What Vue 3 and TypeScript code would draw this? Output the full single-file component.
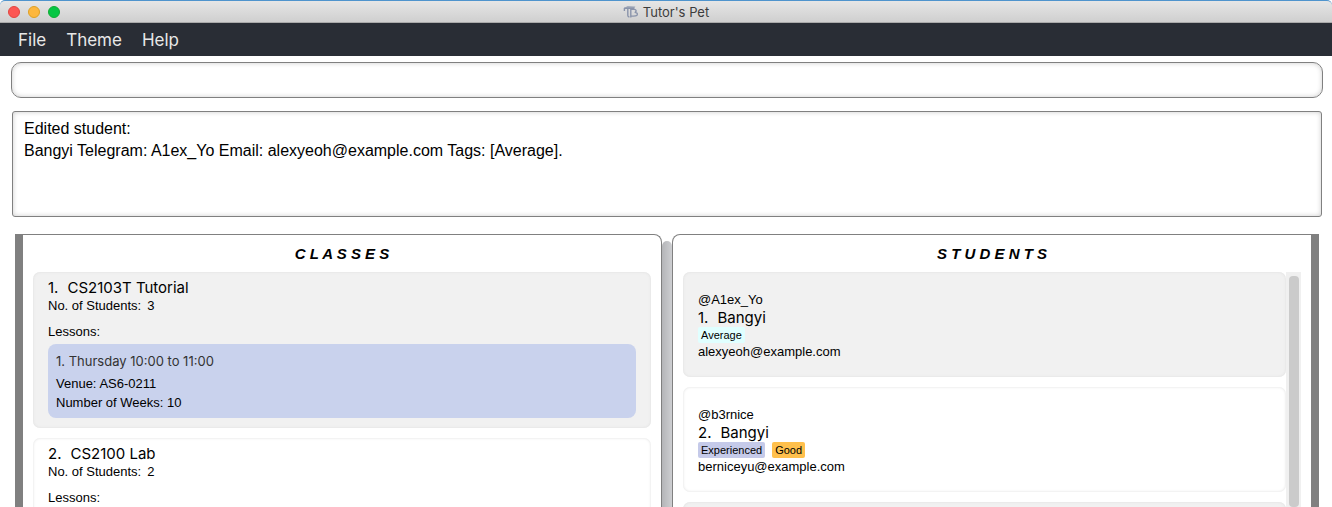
<script setup lang="ts">
import { ref } from 'vue'

interface Lesson {
  slot: string
  venue: string
  weeks: number
}
interface TutorClass {
  name: string
  students: number
  lessons: Lesson[]
}
interface Tag {
  label: string
  kind: string
}
interface Student {
  telegram: string
  name: string
  email: string
  tags: Tag[]
}

const menus: string[] = ['File', 'Theme', 'Help']
const command = ref('')
const result = ref(
  'Edited student:\nBangyi Telegram: A1ex_Yo Email: alexyeoh@example.com Tags: [Average].',
)

const classes: TutorClass[] = [
  {
    name: 'CS2103T Tutorial',
    students: 3,
    lessons: [{ slot: 'Thursday 10:00 to 11:00', venue: 'AS6-0211', weeks: 10 }],
  },
  { name: 'CS2100 Lab', students: 2, lessons: [] },
]

const students: Student[] = [
  {
    telegram: '@A1ex_Yo',
    name: 'Bangyi',
    email: 'alexyeoh@example.com',
    tags: [{ label: 'Average', kind: 'average' }],
  },
  {
    telegram: '@b3rnice',
    name: 'Bangyi',
    email: 'berniceyu@example.com',
    tags: [
      { label: 'Experienced', kind: 'experienced' },
      { label: 'Good', kind: 'good' },
    ],
  },
]
</script>

<template>
  <div class="window">
    <header class="titlebar">
      <div class="lights">
        <button class="light close" type="button" aria-label="Close"></button>
        <button class="light minimise" type="button" aria-label="Minimise"></button>
        <button class="light zoom" type="button" aria-label="Zoom"></button>
      </div>
      <div class="title">
        <svg class="logo" viewBox="0 0 16 14" aria-hidden="true">
          <path d="M.8 3.2 L4.6 1 L12.4 1.6 L11 3.6 Z" fill="#a3abbb" />
          <path
            d="M1 3.2 H11.4 M1.4 3 V6 M4.8 3.4 V10.4 Q4.8 11.8 6.4 12 M7.8 3.6 V12.6 M8 4.4 H11.4 Q14.2 4.8 12.4 7.4 M11.6 7.4 Q15.4 7.8 14 10.2 Q13 11.4 8 11"
            fill="none"
            stroke="#8a94ab"
            stroke-width="1.4"
          />
        </svg>
        <span>Tutor's Pet</span>
      </div>
    </header>

    <nav class="menubar">
      <button v-for="menu in menus" :key="menu" class="menu" type="button">{{ menu }}</button>
    </nav>

    <input v-model="command" class="command" type="text" aria-label="Command" />
    <textarea v-model="result" class="result" readonly aria-label="Result"></textarea>

    <main class="split">
      <section class="panel classes">
        <h2 class="heading">C L A S S E S</h2>
        <div class="list">
          <article v-for="(item, i) in classes" :key="item.name" class="card" :class="{ shaded: i % 2 === 0 }">
            <h3 class="name"><span>{{ i + 1 }}.</span><span>{{ item.name }}</span></h3>
            <p class="line count"><span>No. of Students:</span><span>{{ item.students }}</span></p>
            <p class="line lessons-label">Lessons:</p>
            <div v-for="(lesson, n) in item.lessons" :key="lesson.slot" class="lesson">
              <h4 class="slot">{{ n + 1 }}. {{ lesson.slot }}</h4>
              <p class="detail">Venue: {{ lesson.venue }}</p>
              <p class="detail">Number of Weeks: {{ lesson.weeks }}</p>
            </div>
          </article>
        </div>
      </section>

      <div class="divider" role="separator" aria-orientation="vertical"></div>

      <section class="panel students">
        <h2 class="heading">S T U D E N T S</h2>
        <div class="scroller">
          <div class="list">
            <article
              v-for="(student, i) in students"
              :key="student.email"
              class="card student"
              :class="{ shaded: i % 2 === 0 }"
            >
              <p class="line">{{ student.telegram }}</p>
              <h3 class="name"><span>{{ i + 1 }}.</span><span>{{ student.name }}</span></h3>
              <div class="tags">
                <span v-for="tag in student.tags" :key="tag.label" class="tag" :class="tag.kind">{{ tag.label }}</span>
              </div>
              <p class="line">{{ student.email }}</p>
            </article>
            <article class="card student shaded"></article>
          </div>
          <div class="track"><div class="thumb"></div></div>
        </div>
      </section>
    </main>
  </div>
</template>

<style>
html,
body {
  background: #fff;
}
</style>

<style scoped>
* {
  box-sizing: border-box;
}
.window {
  display: flex;
  flex-direction: column;
  height: 100vh;
  overflow: hidden;
  background: #fff;
  color: #000;
  font-family: 'Liberation Sans', Arial, sans-serif;
  font-size: 13px;
}
h2,
h3,
h4,
p {
  margin: 0;
  font-weight: 400;
}
button {
  padding: 0;
  border: 0;
  background: none;
}
.titlebar {
  display: grid;
  grid-template-columns: 1fr auto 1fr;
  align-items: center;
  flex: none;
  height: 23px;
  padding: 0 8px;
  border-top: 1px solid #4f94cd;
  border-bottom: 1px solid #aaa;
  border-radius: 5px 5px 0 0;
  background: linear-gradient(#e6e6e6, #cfcfcf);
}
.lights {
  display: flex;
  gap: 8px;
}
.light {
  width: 12px;
  height: 12px;
  border-radius: 50%;
}
.close {
  border: 1px solid #e2463f;
  background: #fc5753;
}
.minimise {
  border: 1px solid #dfa023;
  background: #fdb73e;
}
.zoom {
  border: 1px solid #10ac34;
  background: #06c644;
}
.title {
  display: flex;
  align-items: center;
  gap: 4px;
  color: #3c3c3c;
  font-family: Inter, sans-serif;
  font-size: 13px;
  line-height: 16px;
}
.logo {
  width: 16px;
  height: 14px;
}
.menubar {
  display: flex;
  flex: none;
  gap: 20px;
  height: 33px;
  padding: 0 18px;
  background: #292d35;
}
.menu {
  color: #e8e8e8;
  font-family: Inter, sans-serif;
  font-size: 17px;
  line-height: 32px;
}
.command {
  flex: none;
  height: 36px;
  margin: 6px 9px 0 11px;
  padding: 0 12px;
  border: 1px solid #808080;
  border-radius: 10px;
  background: #fff;
  box-shadow: inset 0 0 5px #ccc;
  font-family: 'Liberation Sans', Arial, sans-serif;
  font-size: 16px;
  outline: none;
}
.result {
  flex: none;
  height: 106px;
  margin: 13px 10px 0 12px;
  padding: 6px 11px;
  border: 1px solid #808080;
  border-radius: 3px;
  background: #fff;
  box-shadow: inset 0 0 5px #ccc;
  color: #000;
  font-family: 'Liberation Sans', Arial, sans-serif;
  font-size: 16px;
  line-height: 22px;
  outline: none;
  resize: none;
}
.split {
  display: flex;
  flex: 1;
  min-height: 0;
  margin: 17px 13px 0 15px;
}
.panel {
  display: flex;
  flex: 1;
  flex-direction: column;
  min-width: 0;
  border: 1px solid #808080;
  border-bottom: 0;
}
.classes {
  padding: 0 10px;
  border-left-width: 8px;
  border-radius: 0 8px 0 0;
}
.students {
  padding: 0 10px;
  border-right-width: 8px;
  border-radius: 8px 0 0 0;
}
.divider {
  width: 10px;
  margin-top: 7px;
  border-radius: 5px 5px 0 0;
  background: linear-gradient(90deg, #b4b5b8, #cdced1);
}
.heading {
  flex: none;
  height: 37px;
  font-size: 15px;
  font-style: italic;
  font-weight: 700;
  line-height: 37px;
  text-align: center;
}
.list {
  display: flex;
  flex: 1;
  flex-direction: column;
  gap: 10px;
  min-height: 0;
  min-width: 0;
  overflow: hidden;
}
.card {
  flex: none;
  padding: 6px 15px 10px;
  border-radius: 7px;
  background: #fff;
  box-shadow: inset 0 0 3px #dedede;
}
.card.shaded {
  background: #f1f1f1;
}
.name {
  display: flex;
  gap: 9px;
  font-family: Inter, sans-serif;
  font-size: 15px;
  line-height: 20px;
}
.line {
  line-height: 16px;
}
.count {
  display: flex;
  gap: 6px;
}
.lessons-label {
  margin: 10px 0 4px;
}
.lesson {
  padding: 8px 8px 6px;
  border-radius: 8px;
  background: #c9d2ed;
}
.slot {
  margin-bottom: 3px;
  color: #333;
  font-family: Inter, sans-serif;
  font-size: 13px;
  line-height: 19px;
}
.detail {
  line-height: 19px;
}
.scroller {
  display: flex;
  flex: 1;
  min-height: 0;
}
.card.student {
  height: 105px;
  padding: 20px 15px;
}
.student .name {
  line-height: 19px;
}
.tags {
  display: flex;
  gap: 7px;
  margin-bottom: 1px;
}
.tag {
  padding: 0 3px;
  border-radius: 2px;
  font-size: 11px;
  line-height: 16px;
}
.average {
  background: #e0ffff;
}
.experienced {
  background: #c5cae9;
}
.good {
  background: #ffc04c;
}
.track {
  flex: none;
  width: 15px;
  padding: 4px 2px 0 3px;
  background: #f0f0f0;
}
.thumb {
  height: 100%;
  border-radius: 4px;
  background: #cbcbcb;
}
</style>
